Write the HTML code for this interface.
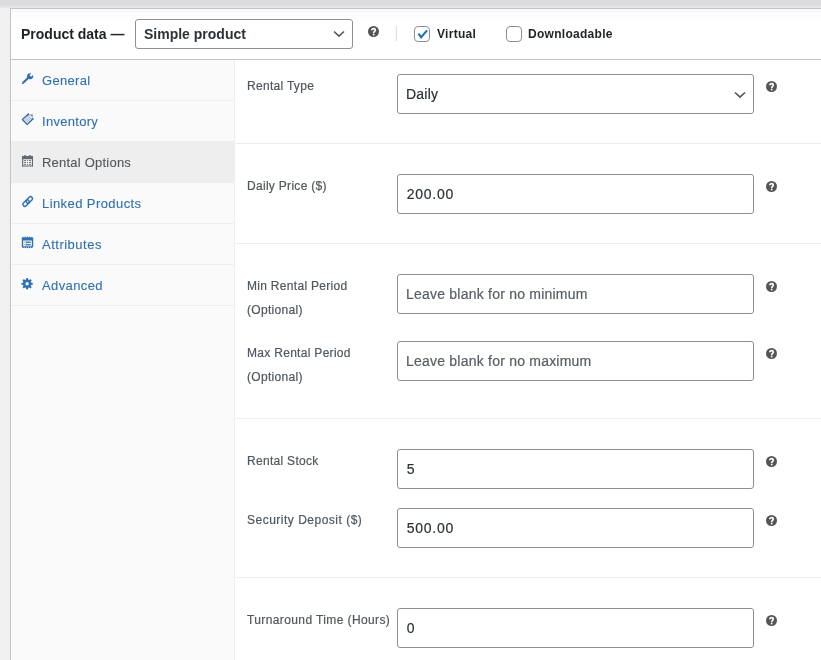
<!DOCTYPE html>
<html><head><meta charset="utf-8">
<style>
*{box-sizing:border-box;margin:0;padding:0}
html,body{width:821px;height:660px;overflow:hidden;background:#f0f0f1;font-family:"Liberation Sans",sans-serif;color:#3c434a}
.a{position:absolute}
.topbar{left:0;top:0;width:821px;height:9px;background:linear-gradient(#dcdcde 0,#dcdcde 6px,#e6e6e7 6px,#e6e6e7 8px,#f0f0f1 8px)}
.hshade{left:11px;top:9px;width:810px;height:9px;background:linear-gradient(#f8f8f8 0,#f9f9f9 4px,#fcfcfc 4px,#fdfdfd 9px)}
.panelb{left:10px;top:8px;width:811px;height:652px;background:#fff;border-top:1px solid #c3c4c7;border-left:1px solid #c3c4c7}
.hline{left:11px;top:59px;width:810px;height:1px;background:#c3c4c7}
.title{left:21px;top:26px;font-size:14px;font-weight:bold;color:#1d2327;white-space:nowrap}
.sel1{left:135px;top:19px;width:218px;height:30px;border:1px solid #8c8f94;border-radius:3px;font-size:14px;font-weight:bold;color:#2c3338;padding:0 8px;line-height:28px;white-space:nowrap}
.help{width:11px;height:11px}
.vsep{left:396px;top:26px;width:1px;height:15px;background:#dcdcde}
.cb{width:16px;height:16px;border:1px solid #8c8f94;border-radius:4px;background:#fff}
.cbl{font-size:12px;font-weight:bold;color:#1d2327;white-space:nowrap;letter-spacing:0.28px}
.side{left:11px;top:60px;width:224px;height:600px;background:#fafafa;border-right:1px solid #eee}
.tab{left:11px;width:223px;height:41px;border-bottom:1px solid #eee;font-size:13px;color:#3170ae}
.tab span{position:absolute;left:31px;top:13px;white-space:nowrap;letter-spacing:0.3px}
.tab svg{position:absolute;left:7px;top:8px}
.tab.act{background:#eee;color:#50575e}
.sep{left:235px;width:586px;height:1px;background:#eee}
.lbl{left:247px;font-size:12px;color:#50575e;line-height:24px;white-space:nowrap;letter-spacing:0.3px}
.inp{left:397px;width:357px;height:40px;border:1px solid #8c8f94;border-radius:3px;font-size:14px;color:#2c3338;padding:0 8px;line-height:38px;background:#fff;white-space:nowrap;letter-spacing:0.22px}
.num{letter-spacing:0.72px;padding-left:8.8px}
.ph{color:#575e65}
.a{will-change:transform}.lbl,.inp{-webkit-text-stroke:0.2px currentColor}.tab span{-webkit-text-stroke:0.1px currentColor}</style></head><body>
<div class="a topbar"></div>
<div class="a panelb"></div>
<div class="a hshade"></div>
<div class="a hline"></div>
<div class="a title">Product data —</div>
<div class="a sel1">Simple product
  <svg class="a" style="left:197px;top:10px" width="12" height="8" viewBox="0 0 12 8"><path d="M1 1.5 L6 6.2 L11 1.5" fill="none" stroke="#50575e" stroke-width="1.6"/></svg>
</div>
<svg class="a help" style="left:368px;top:26px" viewBox="0 0 11 11"><circle cx="5.5" cy="5.5" r="5.5" fill="#555"/><path d="M3.8 4.3 C3.8 3.2 4.6 2.6 5.6 2.6 C6.6 2.6 7.3 3.2 7.3 4.1 C7.3 5.3 5.7 5.4 5.7 6.9" fill="none" stroke="#fff" stroke-width="1.6"/><circle cx="5.7" cy="8.5" r="0.9" fill="#fff"/></svg>
<div class="a vsep"></div>
<div class="a cb" style="left:414px;top:26px">
  <svg class="a" style="left:2px;top:2px" width="12" height="11" viewBox="0 0 12 11"><path d="M1.5 4.6 L4.1 8.2 L10.1 1.4" fill="none" stroke="#2271b1" stroke-width="2.1"/></svg>
</div>
<div class="a cbl" style="left:437px;top:27px">Virtual</div>
<div class="a cb" style="left:506px;top:26px"></div>
<div class="a cbl" style="left:528px;top:27px">Downloadable</div>

<div class="a side"></div>
<div class="a tab" style="top:60px"><svg width="20" height="20" viewBox="0 0 20 20"><path d="M4.9 14.9 L10.6 9.4" stroke="#3170ae" stroke-width="2.1" stroke-linecap="round"/><circle cx="12.1" cy="8.2" r="3.05" fill="#3170ae"/><rect x="-1.15" y="-5" width="2.3" height="5.1" fill="#fafafa" transform="translate(12.4,7.9) rotate(45)"/><circle cx="5.1" cy="14.7" r="0.55" fill="#a9b9cc"/></svg><span>General</span></div>
<div class="a tab" style="top:101px"><svg width="20" height="20" viewBox="0 0 20 20"><path d="M4.3 10.5 L10.4 4.4 L15.7 9.4 L9.2 15.8 Z" fill="#dde2e8"/><path d="M6.4 11.2 L10.8 6.8 M7.5 12.3 L11.9 7.9 M8.6 13.4 L13 9 M9.7 14.5 L14.1 10.1" stroke="#a3afbd" stroke-width="0.7"/><path d="M11.2 5.3 L14.9 8.7 L14.9 5.3 Z" fill="#909aa6"/><path d="M10.6 4.8 L4.4 10.5 L9.2 15.6 L15.4 9.5" fill="none" stroke="#3170ae" stroke-width="1.3" stroke-linejoin="round"/><path d="M8.6 6.7 L10.5 4.1 L11.3 6.3 Z M13.4 9.5 L15.9 9.3 L13.9 11.2 Z" fill="#3170ae"/></svg><span>Inventory</span></div>
<div class="a tab act" style="top:142px"><svg width="20" height="20" viewBox="0 0 20 20"><g fill="#646970"><rect x="4.1" y="6" width="10.9" height="3.2"/><rect x="4.1" y="6" width="1.1" height="10.5"/><rect x="13.9" y="6" width="1.1" height="10.5"/><rect x="4.1" y="15.5" width="10.9" height="1"/><rect x="6.3" y="5" width="1.4" height="2.2"/><rect x="11.3" y="5" width="1.4" height="2.2"/><rect x="6.1" y="10.1" width="1.9" height="0.9"/><rect x="9.1" y="10.1" width="0.9" height="0.9"/><rect x="11.1" y="10.1" width="1.9" height="0.9"/><rect x="6.1" y="12" width="1.9" height="0.9"/><rect x="9.1" y="12" width="0.9" height="0.9"/><rect x="11.1" y="12" width="1.9" height="0.9"/><rect x="6.1" y="13.9" width="1.9" height="0.9"/><rect x="9.1" y="13.9" width="0.9" height="0.9"/><rect x="11.1" y="13.9" width="1.9" height="0.9"/></g></svg><span style="letter-spacing:0.22px">Rental Options</span></div>
<div class="a tab" style="top:183px"><svg width="20" height="20" viewBox="0 0 20 20"><g transform="translate(9.7,10.5) rotate(-45)" fill="none" stroke="#3170ae" stroke-width="1.45"><rect x="-6" y="-1.9" width="7.4" height="3.8" rx="1.9"/><rect x="-1.4" y="-1.9" width="7.4" height="3.8" rx="1.9"/></g></svg><span style="letter-spacing:0.42px">Linked Products</span></div>
<div class="a tab" style="top:224px"><svg width="20" height="20" viewBox="0 0 20 20"><rect x="3.8" y="5.4" width="11.4" height="10" fill="#3170ae"/><g fill="#3170ae"><circle cx="5.2" cy="5.5" r="0.6"/><circle cx="7.3" cy="5.3" r="0.7"/><circle cx="9.4" cy="5.3" r="0.7"/><circle cx="11.5" cy="5.3" r="0.7"/><circle cx="13.6" cy="5.5" r="0.6"/><circle cx="5.3" cy="15.4" r="0.6"/><circle cx="7.3" cy="15.5" r="0.7"/><circle cx="9.4" cy="15.5" r="0.7"/><circle cx="11.5" cy="15.5" r="0.7"/><circle cx="13.5" cy="15.4" r="0.6"/></g><rect x="5.2" y="8.5" width="8.6" height="5.8" fill="#fafafa"/><rect x="7.8" y="9.6" width="5" height="1.3" fill="#3170ae"/><rect x="7.8" y="12.1" width="5" height="1.3" fill="#3170ae"/><rect x="7.7" y="9.2" width="0.6" height="4.8" fill="#6f8fb3"/><rect x="6" y="9.4" width="0.9" height="0.9" fill="#9aa9bb"/><rect x="6" y="12" width="0.9" height="0.9" fill="#9aa9bb"/></svg><span style="letter-spacing:0.5px">Attributes</span></div>
<div class="a tab" style="top:265px"><svg width="20" height="20" viewBox="0 0 20 20"><g fill="#3170ae"><circle cx="9.1" cy="10.8" r="4.2"/><rect x="-1.05" y="-5.6" width="2.1" height="2.4" transform="translate(9.1,10.8) rotate(0)"/><rect x="-1.05" y="-5.6" width="2.1" height="2.4" transform="translate(9.1,10.8) rotate(45)"/><rect x="-1.05" y="-5.6" width="2.1" height="2.4" transform="translate(9.1,10.8) rotate(90)"/><rect x="-1.05" y="-5.6" width="2.1" height="2.4" transform="translate(9.1,10.8) rotate(135)"/><rect x="-1.05" y="-5.6" width="2.1" height="2.4" transform="translate(9.1,10.8) rotate(180)"/><rect x="-1.05" y="-5.6" width="2.1" height="2.4" transform="translate(9.1,10.8) rotate(225)"/><rect x="-1.05" y="-5.6" width="2.1" height="2.4" transform="translate(9.1,10.8) rotate(270)"/><rect x="-1.05" y="-5.6" width="2.1" height="2.4" transform="translate(9.1,10.8) rotate(315)"/></g><circle cx="9.1" cy="10.8" r="1.7" fill="#fafafa"/></svg><span style="letter-spacing:0.38px">Advanced</span></div>

<div class="a sep" style="top:143px"></div>
<div class="a sep" style="top:243px"></div>
<div class="a sep" style="top:418px"></div>
<div class="a sep" style="top:577px"></div>

<div class="a lbl" style="top:74px">Rental Type</div>
<div class="a inp" style="top:74px">Daily
  <svg class="a" style="left:336px;top:16px" width="12" height="8" viewBox="0 0 12 8"><path d="M1 1.5 L6 6.2 L11 1.5" fill="none" stroke="#50575e" stroke-width="1.7"/></svg>
</div>
<div class="a lbl" style="top:174px">Daily Price ($)</div>
<div class="a inp num" style="top:174px">200.00</div>
<div class="a lbl" style="top:274px">Min Rental Period<br>(Optional)</div>
<div class="a inp ph" style="top:274px">Leave blank for no minimum</div>
<div class="a lbl" style="top:341px">Max Rental Period<br>(Optional)</div>
<div class="a inp ph" style="top:341px">Leave blank for no maximum</div>
<div class="a lbl" style="top:449px">Rental Stock</div>
<div class="a inp num" style="top:449px">5</div>
<div class="a lbl" style="top:508px;letter-spacing:0.5px">Security Deposit ($)</div>
<div class="a inp num" style="top:508px">500.00</div>
<div class="a lbl" style="top:608px;letter-spacing:0.39px">Turnaround Time (Hours)</div>
<div class="a inp num" style="top:608px">0</div>

<svg class="a help" style="left:766px;top:81px" viewBox="0 0 11 11"><circle cx="5.5" cy="5.5" r="5.5" fill="#555"/><path d="M3.8 4.3 C3.8 3.2 4.6 2.6 5.6 2.6 C6.6 2.6 7.3 3.2 7.3 4.1 C7.3 5.3 5.7 5.4 5.7 6.9" fill="none" stroke="#fff" stroke-width="1.6"/><circle cx="5.7" cy="8.5" r="0.9" fill="#fff"/></svg>
<svg class="a help" style="left:766px;top:181px" viewBox="0 0 11 11"><circle cx="5.5" cy="5.5" r="5.5" fill="#555"/><path d="M3.8 4.3 C3.8 3.2 4.6 2.6 5.6 2.6 C6.6 2.6 7.3 3.2 7.3 4.1 C7.3 5.3 5.7 5.4 5.7 6.9" fill="none" stroke="#fff" stroke-width="1.6"/><circle cx="5.7" cy="8.5" r="0.9" fill="#fff"/></svg>
<svg class="a help" style="left:766px;top:281px" viewBox="0 0 11 11"><circle cx="5.5" cy="5.5" r="5.5" fill="#555"/><path d="M3.8 4.3 C3.8 3.2 4.6 2.6 5.6 2.6 C6.6 2.6 7.3 3.2 7.3 4.1 C7.3 5.3 5.7 5.4 5.7 6.9" fill="none" stroke="#fff" stroke-width="1.6"/><circle cx="5.7" cy="8.5" r="0.9" fill="#fff"/></svg>
<svg class="a help" style="left:766px;top:348px" viewBox="0 0 11 11"><circle cx="5.5" cy="5.5" r="5.5" fill="#555"/><path d="M3.8 4.3 C3.8 3.2 4.6 2.6 5.6 2.6 C6.6 2.6 7.3 3.2 7.3 4.1 C7.3 5.3 5.7 5.4 5.7 6.9" fill="none" stroke="#fff" stroke-width="1.6"/><circle cx="5.7" cy="8.5" r="0.9" fill="#fff"/></svg>
<svg class="a help" style="left:766px;top:456px" viewBox="0 0 11 11"><circle cx="5.5" cy="5.5" r="5.5" fill="#555"/><path d="M3.8 4.3 C3.8 3.2 4.6 2.6 5.6 2.6 C6.6 2.6 7.3 3.2 7.3 4.1 C7.3 5.3 5.7 5.4 5.7 6.9" fill="none" stroke="#fff" stroke-width="1.6"/><circle cx="5.7" cy="8.5" r="0.9" fill="#fff"/></svg>
<svg class="a help" style="left:766px;top:515px" viewBox="0 0 11 11"><circle cx="5.5" cy="5.5" r="5.5" fill="#555"/><path d="M3.8 4.3 C3.8 3.2 4.6 2.6 5.6 2.6 C6.6 2.6 7.3 3.2 7.3 4.1 C7.3 5.3 5.7 5.4 5.7 6.9" fill="none" stroke="#fff" stroke-width="1.6"/><circle cx="5.7" cy="8.5" r="0.9" fill="#fff"/></svg>
<svg class="a help" style="left:766px;top:615px" viewBox="0 0 11 11"><circle cx="5.5" cy="5.5" r="5.5" fill="#555"/><path d="M3.8 4.3 C3.8 3.2 4.6 2.6 5.6 2.6 C6.6 2.6 7.3 3.2 7.3 4.1 C7.3 5.3 5.7 5.4 5.7 6.9" fill="none" stroke="#fff" stroke-width="1.6"/><circle cx="5.7" cy="8.5" r="0.9" fill="#fff"/></svg>
</body></html>
